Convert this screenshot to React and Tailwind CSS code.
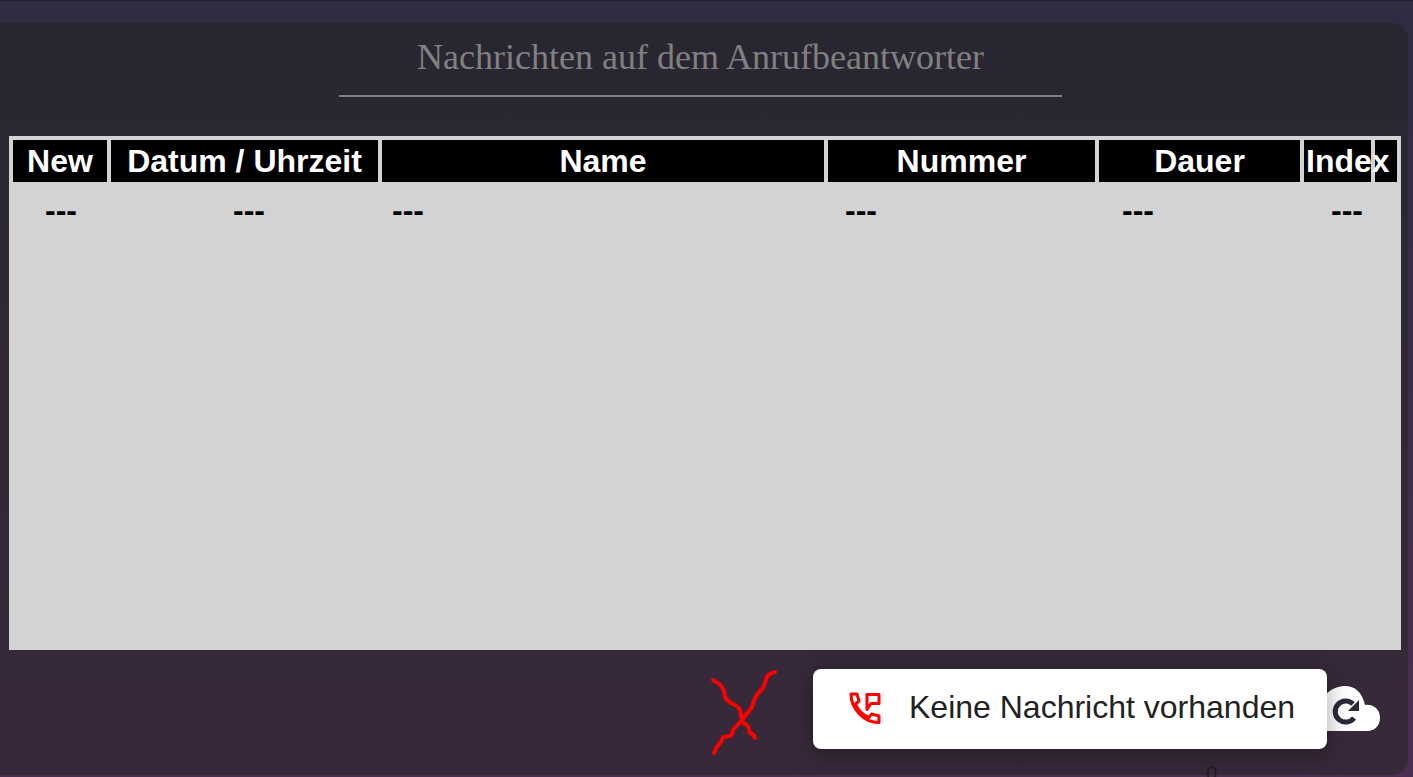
const columns = [
  { label: 'New', width: 'w-[94px]' },
  { label: 'Datum / Uhrzeit', width: 'w-[267px]' },
  { label: 'Name', width: 'w-[442px]' },
  { label: 'Nummer', width: 'w-[267px]' },
  { label: 'Dauer', width: 'w-[201px]' },
  { label: 'Index', width: 'w-[67px]' },
  { label: '', width: 'w-[22px]' },
];

const ScribbleX = () => (
  <svg width="70" height="90" viewBox="0 0 70 90" fill="none" stroke="#ff0000" strokeWidth="4" strokeLinecap="round" strokeLinejoin="round" className="shrink-0">
    <path d="M3 12 Q9 15 12 19 Q15 24 15 29 Q18 34 23 36 Q28 38 30 42 L32 52 Q33 56 37 57 Q39 60 40 65 Q44 66 45 70" />
    <path d="M65 4 Q58 6 57 9 Q55 15 53 20 Q48 25 45 30 Q43 35 42 39 L32 52 L23 62 Q22 67 20 68 L13 69 Q12 73 10 75 Q6 79 4 85" />
  </svg>
);

const PhoneMessage = () => (
  <svg width="36" height="36" viewBox="0 0 36 36" fill="none" stroke="#ff0000" strokeWidth="3" strokeLinejoin="round" strokeLinecap="round">
    <path d="M3 3 H9 L11 10 L7.5 13 C10 19 15 24 21 26.5 L23.5 23 L31 25 V31.5 C16 31.5 3 18 3 3 Z" />
    <path d="M19 3.5 H31 V12.5 H23 L19 18.5 Z" />
  </svg>
);

const CloudRefresh = () => (
  <svg width="70" height="48" viewBox="0 0 70 48" className="shrink-0">
    <path d="M8 46 C-2 46 -2 30 8 28 C8 10 22 1 34 1 C44 1 51 7 54 20 C58 19 69 21 69 33 C69 41 63 46 57 46 Z" fill="#ffffff" />
    <path d="M42 19 A10.5 10.5 0 1 0 43 33" fill="none" stroke="#2b2838" strokeWidth="5" />
    <path d="M48 15 V26 H37 Z" fill="#2b2838" />
  </svg>
);

const App = () => {
  return (
    <div className="relative h-[777px] overflow-hidden border-t border-[#1f1e2b] bg-gradient-to-b from-[#2e2c40] to-[#4a2f50] font-['Liberation_Sans',Arial,sans-serif]">
      <div className="mt-[22px] mr-[5px] flex h-[752px] flex-col rounded-r-2xl bg-gradient-to-b from-[#282631] to-[#38293a]">
        {/* Heading */}
        <div className="w-[1401px] pt-[11px]">
          <h1 className="text-center font-['Liberation_Serif',serif] text-[36px] leading-[46px] text-[#808080]">
            Nachrichten auf dem Anrufbeantworter
          </h1>
          <div className="mx-auto mt-[15px] h-[2px] w-[723px] bg-[#808080]" />
        </div>

        {/* Table */}
        <div className="mt-[39px] ml-[9px] h-[514px] w-[1392px] bg-[#d3d3d3] text-[32px] font-bold">
          <table className="w-full table-fixed border-separate border-spacing-[4px]">
            <thead>
              <tr>
                {columns.map((col) => (
                  <th key={col.label} className={`${col.width} h-[42px] bg-black p-0 text-center leading-[42px] whitespace-nowrap text-white`}>
                    {col.label === 'Index' ? <span className="block pl-[2px] text-left">Index</span> : col.label}
                  </th>
                ))}
              </tr>
            </thead>
            <tbody>
              <tr className="text-left text-black">
                <td className="pt-[1px] pl-[32px] leading-[46px]">---</td>
                <td className="pt-[1px] pl-[122px] leading-[46px]">---</td>
                <td className="pt-[1px] pl-[10px] leading-[46px]">---</td>
                <td className="pt-[1px] pl-[17px] leading-[46px]">---</td>
                <td className="pt-[1px] pl-[23px] leading-[46px]">---</td>
                <td className="pt-[1px] pl-[27px] leading-[46px] whitespace-nowrap">---</td>
                <td />
              </tr>
            </tbody>
          </table>
        </div>

        {/* Bottom controls */}
        <div className="relative flex items-start">
          <div className="mt-[18px] ml-[710px]">
            <ScribbleX />
          </div>
          <div className="mt-[35px] ml-[531px]">
            <CloudRefresh />
          </div>
          <span className="absolute top-[109px] left-[1206px] text-xl text-[#1f1f1f]">0</span>
        </div>
      </div>

      {/* Toast */}
      <div className="absolute top-[668px] left-[813px] flex h-[80px] w-[514px] items-center rounded-lg bg-white pl-[35px] shadow-[0_6px_24px_rgba(0,0,0,0.35)]">
        <PhoneMessage />
        <span className="mb-[5px] ml-[25px] text-[32px] text-[#222222]">Keine Nachricht vorhanden</span>
      </div>
    </div>
  );
};

export default App;
